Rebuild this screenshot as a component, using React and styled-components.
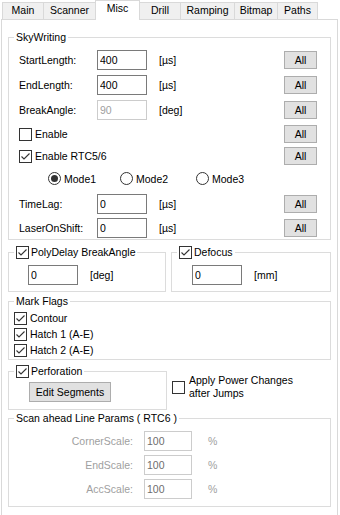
import React from 'react';
import styled, { createGlobalStyle } from 'styled-components';

const GlobalStyle = createGlobalStyle`
  html, body {
    margin: 0;
    padding: 0;
    background: #fff;
    overflow: hidden;
  }
  body {
    font-family: "Liberation Sans", Arial, sans-serif;
    font-size: 10.5px;
    color: #000;
  }
`;

const Window = styled.div`
  width: 340px;
  height: 515px;
  padding-left: 1px;
  box-sizing: border-box;
  background: #fff;
  overflow: hidden;
`;

const TabStrip = styled.div`
  display: flex;
  align-items: flex-end;
  height: 19px;
  padding-left: 1px;
`;

const Tab = styled.div`
  box-sizing: border-box;
  width: ${p => p.$w}px;
  height: ${p => (p.$active ? 20 : 17)}px;
  margin-right: -1px;
  margin-bottom: ${p => (p.$active ? -1 : 0)}px;
  border: 1px solid #d9d9d9;
  border-bottom: none;
  background: ${p => (p.$active ? '#fff' : '#f0f0f0')};
  position: relative;
  z-index: ${p => (p.$active ? 1 : 0)};
  text-align: center;
  line-height: 15px;
`;

const Panel = styled.div`
  box-sizing: border-box;
  width: 337px;
  height: 496px;
  border: 1px solid #d9d9d9;
  border-bottom: none;
  padding: 10px 6px 0 6px;
  display: flex;
  flex-direction: column;
`;

const Group = styled.fieldset`
  box-sizing: border-box;
  margin: ${p => p.$mt || 0}px 0 0 0;
  padding: 0;
  min-width: 0;
  border: 1px solid #dcdcdc;
  width: ${p => (p.$w ? `${p.$w}px` : '100%')};
  flex: none;
`;

const Legend = styled.legend`
  margin-left: 5px;
  padding: 0 2px;
  height: 14px;
  line-height: 14px;
  display: flex;
  align-items: center;
  gap: 2px;
`;

const Body = styled.div`
  display: flex;
  flex-direction: column;
  padding: ${p => p.$pad};
`;

const SideBySide = styled.div`
  display: flex;
  align-items: center;
  gap: 5px;
  margin-top: ${p => p.$mt || 0}px;
`;

const FieldRow = styled.div`
  display: grid;
  grid-template-columns: 78px 50px 1fr 33px;
  align-items: center;
  height: ${p => p.$h}px;
`;

const OptionRow = styled.div`
  display: grid;
  grid-template-columns: 1fr 33px;
  align-items: center;
  height: ${p => p.$h}px;
`;

const Unit = styled.span`
  padding-left: 12px;
  color: ${p => (p.$disabled ? '#a0a0a0' : '#000')};
`;

const TextBox = styled.input`
  box-sizing: border-box;
  width: ${p => p.$w || 50}px;
  height: 20px;
  margin: 0;
  padding: 0 0 0 2px;
  border: 1px solid ${p => (p.$disabled ? '#cccccc' : '#7a7a7a')};
  border-radius: 0;
  background: #fff;
  font-family: "Liberation Sans", Arial, sans-serif;
  font-size: 10.5px;
  color: ${p => (p.$disabled ? p.$dim || '#a0a0a0' : '#000')};
  outline: none;
`;

const Button = styled.button`
  box-sizing: border-box;
  width: ${p => p.$w}px;
  height: ${p => p.$h}px;
  margin: 0;
  padding: 0;
  border: 1px solid #adadad;
  border-radius: 0;
  background: #e1e1e1;
  font-family: "Liberation Sans", Arial, sans-serif;
  font-size: 10.5px;
  color: #000;
`;

const CheckLabel = styled.label`
  display: flex;
  align-items: center;
  gap: ${p => p.$gap || 3}px;
`;

const Box = styled.span`
  box-sizing: border-box;
  width: 13px;
  height: 13px;
  border: 1px solid #333;
  background: #fff;
  display: flex;
  align-items: center;
  justify-content: center;
  flex: none;
`;

const Round = styled(Box)`
  border-radius: 50%;
`;

const Dot = styled.span`
  width: 7px;
  height: 7px;
  border-radius: 50%;
  background: #333;
`;

const RadioGroup = styled.div`
  display: grid;
  grid-template-columns: 72px 76px auto;
  align-items: center;
  height: ${p => p.$h}px;
  padding-left: 29px;
`;

const FlagRow = styled.div`
  height: 16px;
  display: flex;
  align-items: center;
`;

const InlineField = styled.div`
  display: flex;
  align-items: center;
`;

const MultiLine = styled.span`
  line-height: 13px;
`;

const ScanRow = styled.div`
  display: grid;
  grid-template-columns: 124px 48px auto;
  column-gap: 11px;
  align-items: center;
  height: 24px;
`;

const ScanLabel = styled.span`
  text-align: right;
  color: #a0a0a0;
`;

const Percent = styled.span`
  padding-left: 5px;
  color: #a0a0a0;
`;

const CheckBox = ({ checked }) => (
  <Box>
    {checked && (
      <svg width="11" height="11" viewBox="0 0 11 11">
        <polyline points="1.5,5.5 4,8 9.5,2.5" fill="none" stroke="#333" strokeWidth="1.1" />
      </svg>
    )}
  </Box>
);

const Radio = ({ checked }) => <Round>{checked && <Dot />}</Round>;

const tabs = [
  ['Main', 42],
  ['Scanner', 53],
  ['Misc', 45],
  ['Drill', 42],
  ['Ramping', 55],
  ['Bitmap', 44],
  ['Paths', 41],
];

const Field = ({ label, value, unit, h, disabled }) => (
  <FieldRow $h={h}>
    <span>{label}</span>
    <TextBox defaultValue={value} readOnly $disabled={disabled} />
    <Unit>{unit}</Unit>
    <Button $w={33} $h={18}>All</Button>
  </FieldRow>
);

const Option = ({ label, checked, h }) => (
  <OptionRow $h={h}>
    <CheckLabel>
      <CheckBox checked={checked} />
      {label}
    </CheckLabel>
    <Button $w={33} $h={18}>All</Button>
  </OptionRow>
);

const ScanField = ({ label }) => (
  <ScanRow>
    <ScanLabel>{label}</ScanLabel>
    <TextBox $w={48} defaultValue="100" readOnly $disabled $dim="#6d6d6d" />
    <Percent>%</Percent>
  </ScanRow>
);

export default function App() {
  return (
    <Window>
      <GlobalStyle />
      <TabStrip>
        {tabs.map(([name, w]) => (
          <Tab key={name} $w={w} $active={name === 'Misc'}>{name}</Tab>
        ))}
      </TabStrip>
      <Panel>
        <Group>
          <Legend>SkyWriting</Legend>
          <Body $pad="3px 13px 0 10px">
            <Field label="StartLength:" value="400" unit="[µs]" h={25} />
            <Field label="EndLength:" value="400" unit="[µs]" h={25} />
            <Field label="BreakAngle:" value="90" unit="[deg]" h={25} disabled />
            <Option label="Enable" h={24} />
            <Option label="Enable RTC5/6" checked h={20} />
            <RadioGroup $h={25}>
              <CheckLabel><Radio checked />Mode1</CheckLabel>
              <CheckLabel><Radio />Mode2</CheckLabel>
              <CheckLabel><Radio />Mode3</CheckLabel>
            </RadioGroup>
            <Field label="TimeLag:" value="0" unit="[µs]" h={25} />
            <Field label="LaserOnShift:" value="0" unit="[µs]" h={23} />
          </Body>
        </Group>

        <SideBySide $mt={5}>
          <Group $w={158}>
            <Legend><CheckBox checked />PolyDelay BreakAngle</Legend>
            <Body $pad="6px 0 6px 19px">
              <InlineField>
                <TextBox defaultValue="0" readOnly />
                <Unit>[deg]</Unit>
              </InlineField>
            </Body>
          </Group>
          <Group $w={160}>
            <Legend><CheckBox checked />Defocus</Legend>
            <Body $pad="6px 0 6px 20px">
              <InlineField>
                <TextBox defaultValue="0" readOnly />
                <Unit>[mm]</Unit>
              </InlineField>
            </Body>
          </Group>
        </SideBySide>

        <Group $mt={2}>
          <Legend>Mark Flags</Legend>
          <Body $pad="2px 0 1px 5px">
            <FlagRow><CheckLabel><CheckBox checked />Contour</CheckLabel></FlagRow>
            <FlagRow><CheckLabel><CheckBox checked />Hatch 1 (A-E)</CheckLabel></FlagRow>
            <FlagRow><CheckLabel><CheckBox checked />Hatch 2 (A-E)</CheckLabel></FlagRow>
          </Body>
        </Group>

        <SideBySide $mt={4}>
          <Group $w={159}>
            <Legend><CheckBox checked />Perforation</Legend>
            <Body $pad="4px 0 7px 20px">
              <Button $w={82} $h={20}>Edit Segments</Button>
            </Body>
          </Group>
          <CheckLabel $gap={4}>
            <CheckBox />
            <MultiLine>Apply Power Changes<br />after Jumps</MultiLine>
          </CheckLabel>
        </SideBySide>

        <Group $mt={1}>
          <Legend>Scan ahead Line Params ( RTC6 )</Legend>
          <Body $pad="4px 0 5px 0">
            <ScanField label="CornerScale:" />
            <ScanField label="EndScale:" />
            <ScanField label="AccScale:" />
          </Body>
        </Group>
      </Panel>
    </Window>
  );
}
